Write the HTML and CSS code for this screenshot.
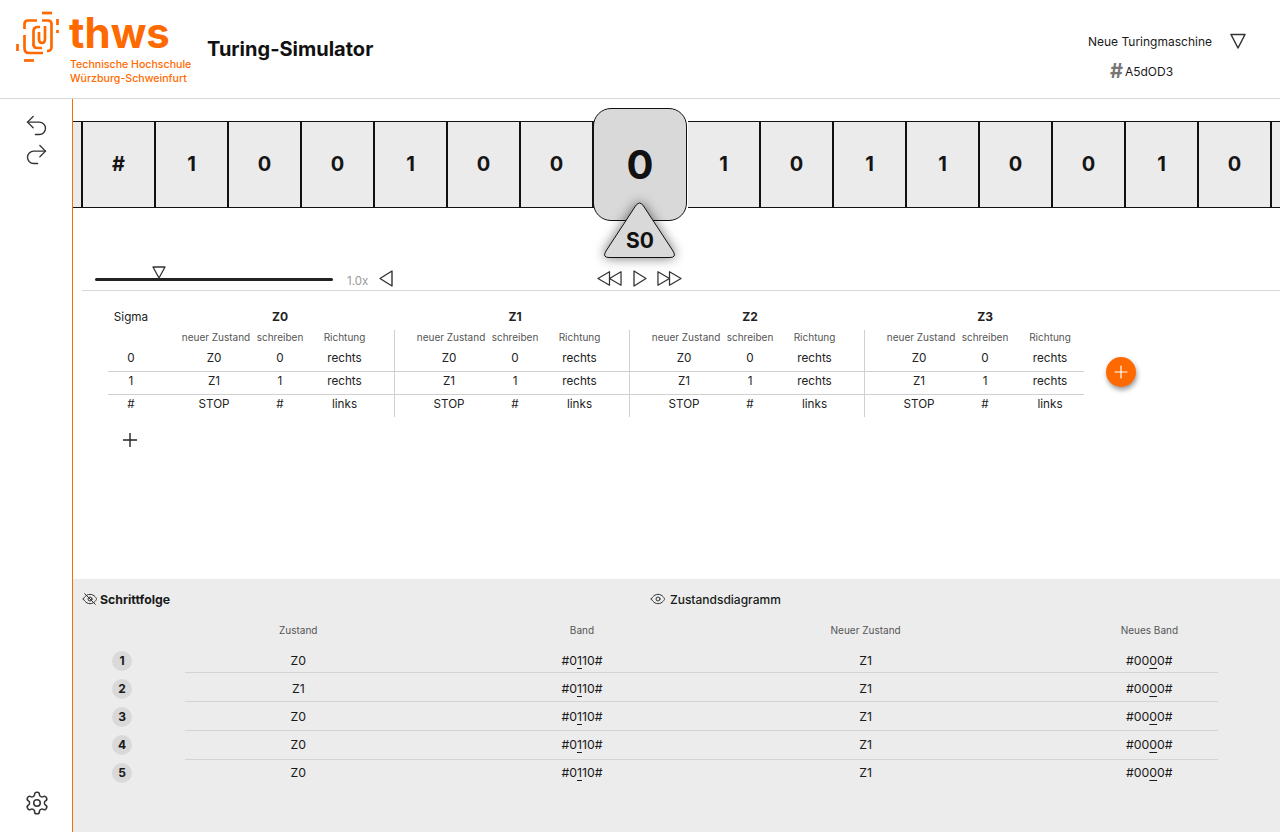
FILE: index.html

```html
<!DOCTYPE html>
<html lang="de">
<head>
  <meta charset="UTF-8">
  <meta name="viewport" content="width=device-width, initial-scale=1.0">
  <title>Turing-Simulator</title>
  <link rel="stylesheet" href="styles.css">
</head>
<body>
  <header class="topbar">
    <div class="brand">
      <svg class="brand-mark" viewBox="14 10 46 54" fill="none" stroke="#ff6a00" stroke-width="2.700">
        <path d="M42 13H52"/>
        <path d="M24.500 29V24Q24.500 20.500 28 20.500H37"/>
        <path d="M57.500 19V25M57.500 30V33"/>
        <path d="M42 20.500H48Q51.500 20.500 51.500 24V47Q51.500 51 47 51"/>
        <path d="M24.500 35V48Q24.500 53 29 53H43"/>
        <path d="M17.500 44V51"/>
        <path d="M24 60.500H34"/>
        <path d="M33.500 46V31Q33.500 27 38 27H40"/>
        <path d="M33.500 44Q33.500 48 37 48H42"/>
        <path d="M39 32V39Q39 43 42 43Q45 43 45 39V26"/>
      </svg>
      <div class="brand-text">
        <div class="brand-name">thws</div>
        <div class="brand-sub">Technische Hochschule<br>Würzburg-Schweinfurt</div>
      </div>
    </div>
    <h1 class="app-title">Turing-Simulator</h1>
    <div class="machine">
      <div class="machine-row">
        <span>Neue Turingmaschine</span>
        <svg class="tri-down" viewBox="0 0 16 16" fill="none" stroke="#333" stroke-width="1.500" stroke-linejoin="round"><path d="M1 1.500H15L8 15Z"/></svg>
      </div>
      <div class="machine-code"><span class="hash">#</span>A5dOD3</div>
    </div>
  </header>

  <div class="layout">
    <aside class="sidebar">
      <div class="history">
        <svg class="icon-history" viewBox="0 0 24 24" fill="none" stroke="#333" stroke-width="1.200" stroke-linecap="round" stroke-linejoin="round"><path d="M9 14 4 9l5-5"/><path d="M4 9h10.500a5.500 5.500 0 0 1 0 11H11"/></svg>
        <svg class="icon-history" viewBox="0 0 24 24" fill="none" stroke="#333" stroke-width="1.200" stroke-linecap="round" stroke-linejoin="round"><path d="m15 14 5-5-5-5"/><path d="M20 9H9.500a5.500 5.500 0 0 0 0 11H13"/></svg>
      </div>
      <svg class="icon-gear" viewBox="0 0 24 24" fill="none" stroke="#333" stroke-width="1.400" stroke-linecap="round" stroke-linejoin="round"><path d="M12.220 2h-.44a2 2 0 0 0-2 2v.18a2 2 0 0 1-1 1.730l-.43.25a2 2 0 0 1-2 0l-.15-.08a2 2 0 0 0-2.730.73l-.22.38a2 2 0 0 0 .73 2.730l.15.1a2 2 0 0 1 1 1.720v.51a2 2 0 0 1-1 1.740l-.15.09a2 2 0 0 0-.73 2.730l.22.38a2 2 0 0 0 2.730.73l.15-.08a2 2 0 0 1 2 0l.43.25a2 2 0 0 1 1 1.730V20a2 2 0 0 0 2 2h.44a2 2 0 0 0 2-2v-.18a2 2 0 0 1 1-1.730l.43-.25a2 2 0 0 1 2 0l.15.08a2 2 0 0 0 2.730-.73l.22-.39a2 2 0 0 0-.73-2.730l-.15-.08a2 2 0 0 1-1-1.740v-.5a2 2 0 0 1 1-1.740l.15-.09a2 2 0 0 0 .73-2.730l-.22-.38a2 2 0 0 0-2.730-.73l-.15.08a2 2 0 0 1-2 0l-.43-.25a2 2 0 0 1-1-1.730V4a2 2 0 0 0-2-2z"/><circle cx="12" cy="12" r="3"/></svg>
    </aside>

    <main class="main">
      <div class="tape">
        <div class="cell cell-edge"></div>
        <div class="cell">#</div>
        <div class="cell">1</div>
        <div class="cell">0</div>
        <div class="cell">0</div>
        <div class="cell">1</div>
        <div class="cell">0</div>
        <div class="cell">0</div>
        <div class="cell-head">
          0
          <div class="pointer">
            <svg class="pointer-shape" viewBox="0 0 72 56"><path d="M31.500 4Q35.500 -2 39.500 4L69 49Q73 55.500 66 55.500L5 55.500Q-2 55.500 2 49Z" fill="#d9d9d9" stroke="#111" stroke-width="1"/></svg>
            <span class="pointer-label">S0</span>
          </div>
        </div>
        <div class="cell">1</div>
        <div class="cell">0</div>
        <div class="cell">1</div>
        <div class="cell">1</div>
        <div class="cell">0</div>
        <div class="cell">0</div>
        <div class="cell">1</div>
        <div class="cell">0</div>
        <div class="cell cell-end"></div>
      </div>

      <div class="controls">
        <div class="slider">
          <svg class="slider-handle" viewBox="0 0 14 13" fill="#fff" stroke="#333" stroke-width="1.300" stroke-linejoin="round"><path d="M1 1H13L7 12Z"/></svg>
        </div>
        <span class="speed">1.0x</span>
        <svg class="tri-left" viewBox="0 0 14 17" fill="none" stroke="#333" stroke-width="1.400" stroke-linejoin="round"><path d="M13 1V16L1 8.500Z"/></svg>
        <div class="player">
          <svg class="player-skip" viewBox="0 0 26 17" fill="none" stroke="#333" stroke-width="1.300" stroke-linejoin="round"><path d="M13 1.500V15.500L1 8.500Z"/><path d="M25 1.500V15.500L13 8.500Z"/></svg>
          <svg class="player-play" viewBox="0 0 14 17" fill="none" stroke="#333" stroke-width="1.300" stroke-linejoin="round"><path d="M1 1V16L13 8.500Z"/></svg>
          <svg class="player-skip" viewBox="0 0 26 17" fill="none" stroke="#333" stroke-width="1.300" stroke-linejoin="round"><path d="M1 1.500V15.500L13 8.500Z"/><path d="M13 1.500V15.500L25 8.500Z"/></svg>
        </div>
      </div>

      <div class="table-area">
        <table class="rules">
          <colgroup>
            <col class="w-sigma">
            <col class="w-a"><col class="w-b"><col class="w-c">
            <col class="w-a"><col class="w-b"><col class="w-c">
            <col class="w-a"><col class="w-b"><col class="w-c">
            <col class="w-a"><col class="w-b"><col class="w-last">
          </colgroup>
          <thead>
            <tr class="row-state">
              <th class="c-sigma">Sigma</th>
              <th colspan="3" class="state">Z0</th>
              <th colspan="3" class="state">Z1</th>
              <th colspan="3" class="state">Z2</th>
              <th colspan="3" class="state state-last">Z3</th>
            </tr>
            <tr class="row-sub">
              <th class="c-sigma"></th>
              <th class="c-a">neuer Zustand</th><th>schreiben</th><th class="c-c">Richtung</th>
              <th class="c-a">neuer Zustand</th><th>schreiben</th><th class="c-c">Richtung</th>
              <th class="c-a">neuer Zustand</th><th>schreiben</th><th class="c-c">Richtung</th>
              <th class="c-a">neuer Zustand</th><th>schreiben</th><th class="c-c c-last">Richtung</th>
            </tr>
          </thead>
          <tbody>
            <tr>
              <td class="c-sigma">0</td>
              <td class="c-a">Z0</td><td>0</td><td class="c-c">rechts</td>
              <td class="c-a">Z0</td><td>0</td><td class="c-c">rechts</td>
              <td class="c-a">Z0</td><td>0</td><td class="c-c">rechts</td>
              <td class="c-a">Z0</td><td>0</td><td class="c-c c-last">rechts</td>
            </tr>
            <tr>
              <td class="c-sigma">1</td>
              <td class="c-a">Z1</td><td>1</td><td class="c-c">rechts</td>
              <td class="c-a">Z1</td><td>1</td><td class="c-c">rechts</td>
              <td class="c-a">Z1</td><td>1</td><td class="c-c">rechts</td>
              <td class="c-a">Z1</td><td>1</td><td class="c-c c-last">rechts</td>
            </tr>
            <tr class="row-last">
              <td class="c-sigma">#</td>
              <td class="c-a">STOP</td><td>#</td><td class="c-c">links</td>
              <td class="c-a">STOP</td><td>#</td><td class="c-c">links</td>
              <td class="c-a">STOP</td><td>#</td><td class="c-c">links</td>
              <td class="c-a">STOP</td><td>#</td><td class="c-c c-last">links</td>
            </tr>
          </tbody>
        </table>
        <button class="add-state" type="button">
          <svg viewBox="0 0 24 24" fill="none" stroke="#fff" stroke-width="1.600" stroke-linecap="round"><path d="M12 4V20M4 12H20"/></svg>
        </button>
      </div>
      <svg class="add-row" viewBox="0 0 24 24" fill="none" stroke="#222" stroke-width="1.400"><path d="M12 5V19M5 12H19"/></svg>

      <section class="pane">
        <div class="tabs">
          <div class="tab tab-active">
            <svg class="eye" viewBox="0 0 24 24" fill="none" stroke="#333" stroke-width="1.500" stroke-linecap="round" stroke-linejoin="round"><path d="M2 12s3-7 10-7 10 7 10 7-3 7-10 7-10-7-10-7Z"/><circle cx="12" cy="12" r="3"/><path d="M4 4 20 20"/></svg>
            Schrittfolge
          </div>
          <div class="tab">
            <svg class="eye" viewBox="0 0 24 24" fill="none" stroke="#333" stroke-width="1.500" stroke-linecap="round" stroke-linejoin="round"><path d="M2 12s3-7 10-7 10 7 10 7-3 7-10 7-10-7-10-7Z"/><circle cx="12" cy="12" r="3"/></svg>
            Zustandsdiagramm
          </div>
        </div>

        <div class="steps-head">
          <span></span>
          <span>Zustand</span><span>Band</span><span>Neuer Zustand</span><span>Neues Band</span>
        </div>
        <div class="steps">
          <div class="step">
            <span class="badge">1</span>
            <span>Z0</span><span>#0<u>1</u>10#</span><span>Z1</span><span>#00<u>0</u>0#</span>
          </div>
          <div class="step">
            <span class="badge">2</span>
            <span>Z1</span><span>#0<u>1</u>10#</span><span>Z1</span><span>#00<u>0</u>0#</span>
          </div>
          <div class="step">
            <span class="badge">3</span>
            <span>Z0</span><span>#0<u>1</u>10#</span><span>Z1</span><span>#00<u>0</u>0#</span>
          </div>
          <div class="step">
            <span class="badge">4</span>
            <span>Z0</span><span>#0<u>1</u>10#</span><span>Z1</span><span>#00<u>0</u>0#</span>
          </div>
          <div class="step">
            <span class="badge">5</span>
            <span>Z0</span><span>#0<u>1</u>10#</span><span>Z1</span><span>#00<u>0</u>0#</span>
          </div>
        </div>
      </section>
    </main>
  </div>
</body>
</html>
```

FILE: styles.css

```css
* {
  box-sizing: border-box;
}
html, body {
  height: 100%;
}
body {
  margin: 0;
  height: 832px;
  overflow: hidden;
  display: flex;
  flex-direction: column;
  font-family: Inter, "Liberation Sans", sans-serif;
  color: #1a1a1a;
  background: #fff;
}

/* top bar */
.topbar {
  height: 99px;
  flex: none;
  display: flex;
  align-items: flex-start;
  border-bottom: 1px solid #d9d9d9;
}
.brand {
  display: flex;
  width: 193px;
  flex: none;
  margin-left: 14px;
  padding-top: 10px;
}
.brand-mark {
  width: 46px;
  height: 54px;
  flex: none;
}
.brand-text {
  margin-left: 9px;
  color: #ff6a00;
}
.brand-name {
  font-size: 42px;
  font-weight: 700;
  line-height: 46px;
  height: 48px;
}
.brand-sub {
  margin-left: 1px;
  font-size: 10.600px;
  font-weight: 500;
  line-height: 14px;
  white-space: nowrap;
}
.app-title {
  margin: 37px 0 0;
  font-size: 20px;
  line-height: 24px;
  font-weight: 700;
  color: #111;
}
.machine {
  margin-left: auto;
  margin-right: 34px;
  padding-top: 31px;
  font-size: 12px;
}
.machine-row {
  display: flex;
  align-items: center;
  gap: 18px;
  height: 20px;
}
.tri-down {
  width: 16px;
  height: 16px;
}
.machine-code {
  display: flex;
  align-items: center;
  margin: 10px 0 0 22px;
  height: 20px;
}
.hash {
  font-size: 20px;
  font-weight: 700;
  color: #777;
  margin-right: 2px;
}

/* sidebar + main */
.layout {
  flex: 1;
  display: flex;
  min-height: 0;
}
.sidebar {
  width: 73px;
  flex: none;
  border-right: 1px solid #ff6a00;
  display: flex;
  flex-direction: column;
  align-items: center;
  justify-content: space-between;
  padding: 13px 0 16px;
}
.history {
  display: flex;
  flex-direction: column;
  gap: 2px;
}
.icon-history {
  width: 27px;
  height: 27px;
  display: block;
}
.icon-gear {
  width: 26px;
  height: 26px;
  margin-left: 1px;
}
.main {
  flex: 1;
  min-width: 0;
  display: flex;
  flex-direction: column;
  overflow: hidden;
}

/* tape */
.tape {
  display: flex;
  align-items: center;
  margin-top: 9px;
  height: 113px;
  flex: none;
}
.cell {
  width: 73px;
  height: 87px;
  padding-bottom: 2px;
  flex: none;
  display: flex;
  align-items: center;
  justify-content: center;
  background: #ebebeb;
  border: 1px solid #111;
  border-width: 1px 2px 1px 0;
  font-size: 20px;
  font-weight: 700;
  color: #151515;
}
.cell-edge {
  width: 10px;
}
.cell-end {
  flex: 1;
  width: auto;
  min-width: 0;
  border-right: 0;
}
.cell-head {
  position: relative;
  width: 94px;
  height: 113px;
  margin: 0 1px 0 -1px;
  flex: none;
  display: flex;
  align-items: center;
  justify-content: center;
  background: #d9d9d9;
  border: 1px solid #111;
  border-radius: 18px;
  font-size: 40px;
  font-weight: 700;
  color: #111;
}
.pointer {
  position: absolute;
  left: 10px;
  top: 93px;
  width: 72px;
  height: 56px;
}
.pointer-shape {
  position: absolute;
  inset: 0;
  overflow: visible;
  filter: drop-shadow(0 0 6px rgba(0, 0, 0, 0.55));
}
.pointer-label {
  position: absolute;
  left: 0;
  right: 0;
  top: 27px;
  text-align: center;
  font-size: 21px;
  line-height: 24px;
  font-weight: 700;
}

/* speed + playback */
.controls {
  display: flex;
  align-items: center;
  height: 33px;
  margin: 37px 0 0 9px;
  padding: 8px 0 0 13px;
  border-bottom: 1px solid #d9d9d9;
  flex: none;
}
.slider {
  position: relative;
  width: 238px;
  height: 3px;
  margin-top: 2px;
  background: #222;
  border-radius: 2px;
}
.slider-handle {
  position: absolute;
  left: 56.500px;
  top: -12px;
  width: 14px;
  height: 13px;
}
.speed {
  margin: 5px 0 0 14px;
  width: 32px;
  font-size: 11.500px;
  color: #999;
}
.tri-left {
  width: 14px;
  height: 17px;
}
.player {
  display: flex;
  align-items: center;
  gap: 10.500px;
  margin-left: 204px;
}
.player-skip {
  width: 25px;
  height: 17px;
}
.player-play {
  width: 14px;
  height: 17px;
}

/* transition table */
.table-area {
  display: flex;
  align-items: center;
  margin: 17px 0 0 35px;
  flex: none;
}
.rules {
  border-collapse: separate;
  border-spacing: 0;
  table-layout: fixed;
  width: 976px;
  font-size: 11.700px;
  color: #222;
}
.w-sigma {
  width: 52px;
}
.w-a {
  width: 92px;
}
.w-b {
  width: 56px;
}
.w-c {
  width: 87px;
}
.w-last {
  width: 71px;
}
.rules th, .rules td {
  padding: 0;
  text-align: center;
  vertical-align: top;
  font-weight: 400;
  line-height: 16px;
}
.rules .c-sigma {
  padding-right: 6px;
}
.rules .c-a {
  padding-left: 16px;
}
.rules .c-c {
  padding-right: 13px;
  border-right: 1px solid #d0d0d0;
}
.rules .c-last {
  padding: 0 0 0 3px;
  border-right: 0;
}
.rules .row-state th {
  height: 22px;
  padding-top: 1px;
}
.rules .row-state .state {
  padding-left: 5px;
  font-weight: 700;
  font-size: 12px;
}
.rules .row-state .state-last {
  padding-left: 21px;
}
.rules .row-sub th {
  height: 19px;
  padding-top: 1px;
  font-size: 10px;
  line-height: 12px;
  color: #555;
}
.rules .row-sub .c-a {
  padding-left: 20px;
}
.rules .row-sub .c-last {
  padding-top: 1px;
}
.rules td {
  height: 23px;
  padding-top: 1px;
  border-bottom: 1px solid #d0d0d0;
}
.rules .c-last {
  padding-top: 1px;
}
.rules .row-last td {
  height: 22px;
  border-bottom: 0;
}
.add-state {
  width: 30px;
  height: 30px;
  margin: 18px 0 0 22px;
  padding: 6px;
  flex: none;
  border: 0;
  border-radius: 50%;
  background: #ff6a00;
  box-shadow: 1px 3px 5px rgba(0, 0, 0, 0.4);
}
.add-state svg {
  display: block;
  width: 18px;
  height: 18px;
}
.add-row {
  width: 24px;
  height: 24px;
  margin: 11px 0 0 45px;
  flex: none;
}

/* step list */
.pane {
  margin-top: auto;
  height: 253px;
  flex: none;
  background: #ececec;
  font-size: 12.300px;
}
.tabs {
  display: grid;
  grid-template-columns: 568px auto;
  padding: 12px 0 0 9px;
}
.tab {
  display: flex;
  align-items: center;
  gap: 4px;
  height: 16px;
  font-size: 12px;
  font-weight: 500;
}
.tab-active {
  gap: 2px;
  font-size: 12.300px;
  font-weight: 700;
}
.eye {
  width: 16px;
  height: 16px;
}
.steps-head, .step {
  display: grid;
  grid-template-columns: 22.600px repeat(4, 240px);
  column-gap: 43.700px;
  align-items: center;
  text-align: center;
}
.steps-head {
  margin: 17px 0 0 39px;
  height: 12px;
  font-size: 10px;
  line-height: 12px;
  color: #555;
}
.steps {
  margin: 8px 0 0 39px;
  padding-top: 2px;
  /* rules run on a slightly wider pitch than the rows */
  background: repeating-linear-gradient(to bottom, transparent 0 28px, #d4d4d4 28px 29px) 73px 0 / 1033px 116px no-repeat;
}
.step {
  height: 28px;
}
.step u {
  text-underline-offset: 3px;
  text-decoration-thickness: 1px;
}
.badge {
  width: 20px;
  height: 20px;
  margin-top: 1px;
  border-radius: 50%;
  background: #d9d9d9;
  font-size: 12px;
  font-weight: 700;
  line-height: 20px;
}
```
